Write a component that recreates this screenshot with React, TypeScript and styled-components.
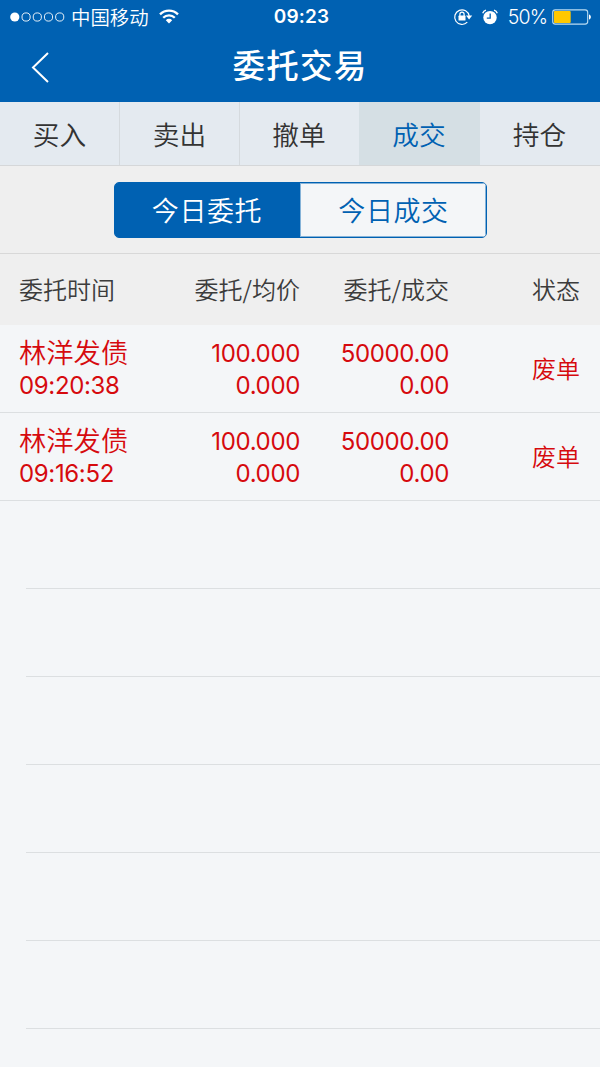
import React from "react";
import styled, { createGlobalStyle } from "styled-components";

const BLUE = "#0061b2";
const RED = "#d60a0e";
const CJK = '"Noto Sans CJK SC DemiLight", "Noto Sans CJK SC", sans-serif';

const GlobalStyle = createGlobalStyle`
  * { box-sizing: border-box; }
  html, body { margin: 0; padding: 0; background: #f4f6f8; }
  body { font-family: Inter, "Noto Sans CJK SC", sans-serif; color: #333; overflow: hidden; }
`;

const Screen = styled.div`
  width: 600px;
  height: 1067px;
  overflow: hidden;
  background: #f4f6f8;
`;

const Header = styled.header`
  height: 102px;
  background: ${BLUE};
  color: #fff;
`;

const StatusBar = styled.div`
  display: grid;
  grid-template-columns: 1fr auto 1fr;
  align-items: center;
  height: 32px;
  padding: 0 8px 0 10px;
`;

const StatusGroup = styled.div<{ $end?: boolean }>`
  display: flex;
  align-items: center;
  justify-content: ${(p) => (p.$end ? "flex-end" : "flex-start")};
  height: 32px;
`;

const Carrier = styled.span`
  margin: 0 10px 0 6px;
  font: 350 19.4px/32px ${CJK};
`;

const Clock = styled.span`
  padding: 1px 0 0 1px;
  font-size: 19px;
  line-height: 32px;
  font-weight: 600;
  letter-spacing: 0.2px;
`;

const Percent = styled.span`
  margin: 0 5px 0 10px;
  padding-top: 1px;
  font-size: 19.5px;
  line-height: 32px;
  font-weight: 350;
  letter-spacing: -0.9px;
`;

const StatusIcons = styled.div`
  display: flex;
  align-items: center;
  gap: 9px;
`;

const NavBar = styled.div`
  display: grid;
  grid-template-columns: 80px 1fr 80px;
  align-items: center;
  height: 70px;
`;

const BackButton = styled.button`
  display: flex;
  align-items: center;
  height: 70px;
  padding: 0 0 0 31px;
  border: 0;
  background: none;
`;

const Title = styled.h1`
  margin: 0;
  font: 500 32.5px/64px "Noto Sans CJK SC", sans-serif;
  letter-spacing: 1.2px;
  text-align: center;
  height: 70px;
`;

const Tabs = styled.nav`
  display: grid;
  grid-template-columns: 120px 120px 119px 121px 120px;
  height: 64px;
  border-bottom: 1px solid #d5d7d9;
`;

const Tab = styled.button<{ $active?: boolean; $divided?: boolean }>`
  border: 0;
  border-right: 1px solid ${(p) => (p.$divided ? "#d5dade" : "transparent")};
  background: ${(p) => (p.$active ? "#d5dfe4" : "#e4eaf0")};
  color: ${(p) => (p.$active ? BLUE : "#333")};
  font: 350 26.7px/62px ${CJK};
  padding: 0;
`;

const SegmentBar = styled.div`
  display: flex;
  justify-content: center;
  align-items: center;
  height: 88px;
  background: #efefef;
  border-bottom: 1px solid #d8d8d8;
`;

const Segments = styled.div`
  display: grid;
  grid-template-columns: 185px 1fr;
  width: 373px;
  height: 56px;
  border: 1px solid ${BLUE};
  border-radius: 5px;
  overflow: hidden;
`;

const Segment = styled.button<{ $active?: boolean }>`
  border: 0;
  padding: 0 0 0 ${(p) => (p.$active ? 0 : 2)}px;
  background: ${(p) => (p.$active ? BLUE : "#f4f6f8")};
  color: ${(p) => (p.$active ? "#fff" : BLUE)};
  font: 350 27px/54px ${CJK};
  letter-spacing: 0.6px;
  box-shadow: inset 0 0 0 1px ${(p) => (p.$active ? BLUE : "rgba(0, 97, 178, 0.45)")};
`;

const Row = styled.div`
  display: grid;
  grid-template-columns: 150px 131px 149px 1fr;
  align-items: center;
  height: 88px;
  padding: 0 20px 0 19px;
  border-bottom: 1px solid #dcdfe1;
  color: ${RED};
`;

const HeadRow = styled(Row)`
  height: 71px;
  padding-bottom: 1px;
  border: 0;
  background: #efefef;
  color: #3c3c3c;
  font: 350 24px/70px ${CJK};
`;

const Cell = styled.div<{ $right?: boolean }>`
  text-align: ${(p) => (p.$right ? "right" : "left")};
  white-space: nowrap;
`;

const Name = styled.div`
  height: 32px;
  font: 350 27.3px/28px ${CJK};
`;

const Figure = styled.div`
  height: 32px;
  font-size: 24px;
  line-height: 34px;
  letter-spacing: -0.35px;
`;

const Status = styled.div`
  padding-bottom: 1px;
  font: 350 24px/36px ${CJK};
  text-align: right;
`;

const EmptyRow = styled.div`
  height: 88px;
  margin-left: 26px;
  border-bottom: 1px solid #dcdfe1;
`;

const SignalDots = () => (
  <svg width="55" height="12" viewBox="0 0 55 12">
    <circle cx="4.8" cy="6" r="4.6" fill="#fff" />
    {[16.1, 27.3, 38.5, 49.7].map((x) => (
      <circle key={x} cx={x} cy="6" r="4.1" fill="none" stroke="#fff" strokeWidth="0.9" />
    ))}
  </svg>
);

const WifiIcon = () => (
  <svg width="20" height="15" viewBox="0 0 20 15" fill="none" stroke="#fff" strokeWidth="2.3">
    <path d="M1 5.4a12.7 12.7 0 0 1 18 0" />
    <path d="M4.2 8.8a8.2 8.2 0 0 1 11.6 0" />
    <path d="M10 14.4 6.8 11.2a4.5 4.5 0 0 1 6.4 0Z" fill="#fff" stroke="none" />
  </svg>
);

const RotationLockIcon = () => (
  <svg width="20" height="18" viewBox="0 0 20 18" fill="none" stroke="#fff">
    <path d="M14.3 14.2A7.3 7.3 0 1 1 16.2 8" strokeWidth="1.2" />
    <path d="M13 7.6h6.2l-3.1 3.8Z" fill="#fff" stroke="none" />
    <rect x="5.5" y="7.6" width="7" height="5" rx=".6" fill="#fff" stroke="none" />
    <path d="M6.9 8V6.2a2.1 2.1 0 0 1 4.2 0V8" strokeWidth="1.2" />
  </svg>
);

const AlarmIcon = () => (
  <svg width="16" height="16" viewBox="0 0 16 16" fill="none">
    <circle cx="8" cy="8.6" r="6.7" fill="#fff" />
    <path d="M.7 4.3A4.5 4.5 0 0 1 4 1.2M15.3 4.3A4.5 4.5 0 0 0 12 1.2" stroke="#fff" strokeWidth="1.3" />
    <path d="M8.2 4.4v4.8H4.8" stroke={BLUE} strokeWidth="1.3" />
  </svg>
);

const BatteryIcon = () => (
  <svg width="40" height="16" viewBox="0 0 40 16">
    <rect x="0.7" y="0.9" width="35" height="14.2" rx="2.6" fill="none" stroke="#b9dcf2" strokeWidth="1.1" />
    <rect x="1.9" y="2" width="16.8" height="12" rx="1" fill="#ffc800" />
    <path d="M37 5.5c2.5.6 2.5 4.4 0 5Z" fill="#fff" />
  </svg>
);

const ChevronLeft = () => (
  <svg width="19" height="32" viewBox="0 0 19 32" fill="none" stroke="#fff" strokeWidth="2">
    <path d="M17 2 2 16.5 17 31" />
  </svg>
);

const tabs = ["买入", "卖出", "撤单", "成交", "持仓"];
const activeTab = 3;

const orders = [
  { name: "林洋发债", time: "09:20:38", price: "100.000", avg: "0.000", amount: "50000.00", filled: "0.00", status: "废单" },
  { name: "林洋发债", time: "09:16:52", price: "100.000", avg: "0.000", amount: "50000.00", filled: "0.00", status: "废单" },
];

export default function App() {
  return (
    <Screen>
      <GlobalStyle />
      <Header>
        <StatusBar>
          <StatusGroup>
            <SignalDots />
            <Carrier>中国移动</Carrier>
            <WifiIcon />
          </StatusGroup>
          <Clock>09:23</Clock>
          <StatusGroup $end>
            <StatusIcons>
              <RotationLockIcon />
              <AlarmIcon />
            </StatusIcons>
            <Percent>50%</Percent>
            <BatteryIcon />
          </StatusGroup>
        </StatusBar>
        <NavBar>
          <BackButton aria-label="返回">
            <ChevronLeft />
          </BackButton>
          <Title>委托交易</Title>
        </NavBar>
      </Header>
      <Tabs>
        {tabs.map((label, i) => (
          <Tab key={label} $active={i === activeTab} $divided={i < activeTab - 1}>
            {label}
          </Tab>
        ))}
      </Tabs>
      <SegmentBar>
        <Segments>
          <Segment $active>今日委托</Segment>
          <Segment>今日成交</Segment>
        </Segments>
      </SegmentBar>
      <HeadRow>
        <Cell>委托时间</Cell>
        <Cell $right>委托/均价</Cell>
        <Cell $right>委托/成交</Cell>
        <Cell $right>状态</Cell>
      </HeadRow>
      {orders.map((o) => (
        <Row key={o.time}>
          <Cell>
            <Name>{o.name}</Name>
            <Figure>{o.time}</Figure>
          </Cell>
          <Cell $right>
            <Figure>{o.price}</Figure>
            <Figure>{o.avg}</Figure>
          </Cell>
          <Cell $right>
            <Figure>{o.amount}</Figure>
            <Figure>{o.filled}</Figure>
          </Cell>
          <Status>{o.status}</Status>
        </Row>
      ))}
      {Array.from({ length: 7 }, (_, i) => (
        <EmptyRow key={i} />
      ))}
    </Screen>
  );
}
